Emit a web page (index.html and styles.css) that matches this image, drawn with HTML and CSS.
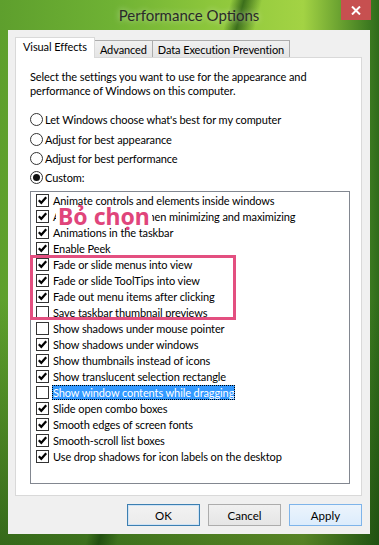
FILE: index.html
```html
<!DOCTYPE html>
<html>
<head>
<meta charset="utf-8">
<link rel="stylesheet" href="styles.css">
</head>
<body>
<div class="window">
  <div class="titlebar">
    <span></span>
    <span class="title">Performance Options</span>
    <button class="close" aria-label="Close"><svg width="10" height="9" viewBox="0 0 10 9"><path d="M1 0.5 L9 8.5 M9 0.5 L1 8.5" stroke="#fff" stroke-width="2"/></svg></button>
  </div>
  <div class="client">
    <div class="tabs">
      <div class="tab active">Visual Effects</div>
      <div class="tab">Advanced</div>
      <div class="tab">Data Execution Prevention</div>
    </div>
    <div class="panel">
      <p class="desc">Select the settings you want to use for the appearance and performance of Windows on this computer.</p>
      <div class="radios">
        <div class="radio"><span class="dot"></span>Let Windows choose what's best for my computer</div>
        <div class="radio"><span class="dot"></span>Adjust for best appearance</div>
        <div class="radio"><span class="dot"></span>Adjust for best performance</div>
        <div class="radio on"><span class="dot"></span>Custom:</div>
      </div>
      <div class="list">
        <div class="item on"><span class="cb"></span><span class="lbl">Animate controls and elements inside windows</span></div>
        <div class="item on"><span class="cb"></span><span class="lbl">Animate windows when minimizing and maximizing</span></div>
        <div class="item on"><span class="cb"></span><span class="lbl">Animations in the taskbar</span></div>
        <div class="item on"><span class="cb"></span><span class="lbl">Enable Peek</span></div>
        <div class="item on"><span class="cb"></span><span class="lbl">Fade or slide menus into view</span></div>
        <div class="item on"><span class="cb"></span><span class="lbl">Fade or slide ToolTips into view</span></div>
        <div class="item on"><span class="cb"></span><span class="lbl">Fade out menu items after clicking</span></div>
        <div class="item"><span class="cb"></span><span class="lbl">Save taskbar thumbnail previews</span></div>
        <div class="item"><span class="cb"></span><span class="lbl">Show shadows under mouse pointer</span></div>
        <div class="item on"><span class="cb"></span><span class="lbl">Show shadows under windows</span></div>
        <div class="item on"><span class="cb"></span><span class="lbl">Show thumbnails instead of icons</span></div>
        <div class="item on"><span class="cb"></span><span class="lbl">Show translucent selection rectangle</span></div>
        <div class="item sel"><span class="cb"></span><span class="lbl">Show window contents while dragging</span></div>
        <div class="item on"><span class="cb"></span><span class="lbl">Slide open combo boxes</span></div>
        <div class="item on"><span class="cb"></span><span class="lbl">Smooth edges of screen fonts</span></div>
        <div class="item on"><span class="cb"></span><span class="lbl">Smooth-scroll list boxes</span></div>
        <div class="item on"><span class="cb"></span><span class="lbl">Use drop shadows for icon labels on the desktop</span></div>
        <div class="note">Bỏ chọn</div>
        <div class="mark"></div>
      </div>
    </div>
    <div class="buttons">
      <button class="btn default">OK</button>
      <button class="btn">Cancel</button>
      <button class="btn apply">Apply</button>
    </div>
  </div>
</div>
</body>
</html>
```
FILE: styles.css
```css
html, body {
  margin: 0;
  padding: 0;
  overflow: hidden;
}
body {
  font-family: Lato, "Noto Sans", sans-serif;
  font-size: 11px;
  letter-spacing: -0.1px;
  color: #000;
}
.window {
  width: 379px;
  height: 545px;
  box-sizing: border-box;
  display: flex;
  flex-direction: column;
  padding: 0 9px 11px 8px;
  background:
    linear-gradient(180deg, rgba(0,0,0,0) 55%, rgba(20,60,10,0.55) 100%),
    linear-gradient(105deg, rgba(0,0,0,0) 44%, rgba(30,80,15,0.75) 46.5%, rgba(0,0,0,0) 50%),
    linear-gradient(90deg, #5e9f2d 0%, #6fb234 30%, #8cc63b 55%, #a3d344 80%, #3f7c21 97%, #2f6b1a 100%);
}
.titlebar {
  height: 31px;
  display: grid;
  grid-template-columns: 1fr auto 1fr;
  align-items: start;
}
.title {
  font-family: Lato, "Noto Sans", sans-serif;
  font-size: 15px;
  letter-spacing: 0;
  line-height: 20px;
  padding-top: 5px;
  color: #2a2a2a;
  text-shadow: 0 0 6px rgba(255,255,255,0.6);
}
.close {
  justify-self: end;
  width: 30px;
  height: 20px;
  margin-right: -1px;
  border: 0;
  padding: 0;
  background: #c75050;
  display: flex;
  align-items: center;
  justify-content: center;
}
.client {
  flex: 1;
  background: #f0f0f0;
  display: flex;
  flex-direction: column;
  padding: 7px 8px 8px 7px;
}
.tabs {
  display: flex;
  align-items: flex-end;
  height: 20px;
  position: relative;
  z-index: 1;
}
.tab {
  height: 17px;
  box-sizing: border-box;
  border: 1px solid #acacac;
  border-bottom: 0;
  background: linear-gradient(#f0f0f0, #e5e5e5);
  padding: 0 5px;
  line-height: 17px;
  margin-left: -1px;
  white-space: nowrap;
}
.tab:first-child { margin-left: 0; }
.tab.active {
  height: 21px;
  background: #fff;
  border-color: #d9d9d9;
  line-height: 18px;
  padding: 0 7px 0 7px;
  margin-bottom: -1px;
  position: relative;
  z-index: 2;
}
.panel {
  height: 439px;
  box-sizing: border-box;
  background: #fff;
  border: 1px solid #d9d9d9;
  padding: 12px 12px 0 14px;
}
.desc {
  margin: 0;
  line-height: 14px;
}
.radios {
  margin-top: 12px;
  display: flex;
  flex-direction: column;
}
.radio {
  height: 19.4px;
  display: flex;
  align-items: center;
  gap: 2px;
  white-space: nowrap;
}
.dot {
  width: 13px;
  height: 13px;
  box-sizing: border-box;
  border: 1px solid #333;
  border-radius: 50%;
  background: #fff;
  display: flex;
  align-items: center;
  justify-content: center;
}
.radio.on .dot::after {
  content: "";
  width: 7px;
  height: 7px;
  border-radius: 50%;
  background: #111;
}
.list {
  position: relative;
  margin-top: 3px;
  width: 320px;
  height: 293px;
  box-sizing: border-box;
  border: 1px solid #828790;
  padding: 1px 0 0 5px;
}
.item {
  height: 16px;
  display: flex;
  align-items: center;
  gap: 3px;
  white-space: nowrap;
}
.cb {
  width: 13px;
  height: 13px;
  flex: none;
  box-sizing: border-box;
  border: 1px solid #333;
  background: #fff;
}
.item.on .cb {
  background: #fff url("data:image/svg+xml,%3Csvg xmlns='http://www.w3.org/2000/svg' width='11' height='11' viewBox='0 0 11 11'%3E%3Cpath d='M1.8 5.2 L4.3 7.8 L9.2 2.2' fill='none' stroke='%23000' stroke-width='2.2'/%3E%3C/svg%3E") no-repeat center;
}
.lbl {
  line-height: 15px;
  padding: 0 1px;
}
.item.sel .lbl {
  background: #3399ff;
  color: #fff;
  outline: 1px dotted #000;
  outline-offset: -1px;
}
.note {
  position: absolute;
  left: 25px;
  top: 15px;
  background: #fff;
  color: #e0457b;
  font-family: "Noto Sans", "Open Sans", sans-serif;
  font-weight: bold;
  font-size: 23px;
  letter-spacing: 0;
  line-height: 19px;
  height: 19px;
  padding: 0 2px;
  white-space: nowrap;
}
.mark {
  position: absolute;
  left: -1px;
  top: 63px;
  width: 206px;
  height: 65px;
  box-sizing: border-box;
  border: 3px solid #e34f80;
}
.buttons {
  margin-top: 8px;
  display: flex;
  justify-content: flex-end;
  gap: 8px;
}
.btn {
  width: 73px;
  height: 22px;
  box-sizing: border-box;
  border: 1px solid #acacac;
  background: linear-gradient(#f0f0f0, #e5e5e5);
  font-family: Lato, "Noto Sans", sans-serif;
  font-size: 11.5px;
  color: #000;
  padding: 0;
}
.btn.default {
  border-color: #3c7fb1;
  background: linear-gradient(#f2f2f2, #ebebeb);
  box-shadow: inset 0 0 0 1px #cfe3f5;
}
.btn.apply {
  border-color: #7eb4ea;
  background: linear-gradient(#ecf4fc, #dcecfc);
}
```
